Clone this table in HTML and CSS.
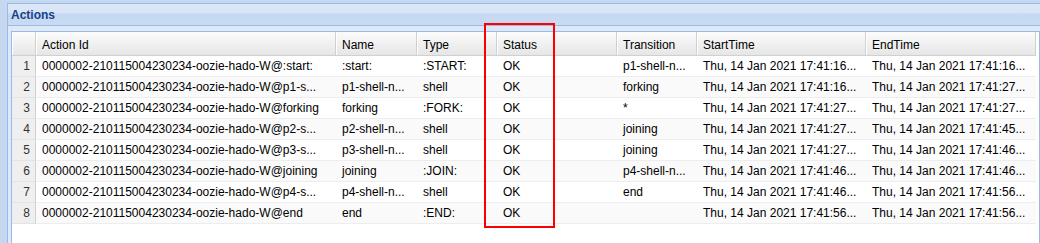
FILE: index.html
```html
<!DOCTYPE html>
<html>
<head>
  <meta charset="utf-8">
  <title>Workflow Actions</title>
  <link rel="stylesheet" href="styles.css">
</head>
<body>
  <div class="viewport">
    <div class="panel">
      <div class="panel-header"><span class="panel-title">Actions</span></div>
      <div class="panel-body">
        <div class="grid">
          <table class="grid-table">
            <colgroup>
              <col class="c-rn"><col class="c-id"><col class="c-name"><col class="c-type">
              <col class="c-status"><col class="c-trans"><col class="c-start"><col class="c-end">
            </colgroup>
            <thead>
              <tr>
                <th class="rn"></th>
                <th>Action Id</th>
                <th>Name</th>
                <th>Type</th>
                <th>Status</th>
                <th>Transition</th>
                <th>StartTime</th>
                <th>EndTime</th>
              </tr>
            </thead>
            <tbody>
              <tr>
                <td class="rn">1</td>
                <td>0000002-210115004230234-oozie-hado-W@:start:</td>
                <td>:start:</td>
                <td>:START:</td>
                <td>OK</td>
                <td>p1-shell-n...</td>
                <td>Thu, 14 Jan 2021 17:41:16...</td>
                <td>Thu, 14 Jan 2021 17:41:16...</td>
              </tr>
              <tr>
                <td class="rn">2</td>
                <td>0000002-210115004230234-oozie-hado-W@p1-s...</td>
                <td>p1-shell-n...</td>
                <td>shell</td>
                <td>OK</td>
                <td>forking</td>
                <td>Thu, 14 Jan 2021 17:41:16...</td>
                <td>Thu, 14 Jan 2021 17:41:27...</td>
              </tr>
              <tr>
                <td class="rn">3</td>
                <td>0000002-210115004230234-oozie-hado-W@forking</td>
                <td>forking</td>
                <td>:FORK:</td>
                <td>OK</td>
                <td>*</td>
                <td>Thu, 14 Jan 2021 17:41:27...</td>
                <td>Thu, 14 Jan 2021 17:41:27...</td>
              </tr>
              <tr>
                <td class="rn">4</td>
                <td>0000002-210115004230234-oozie-hado-W@p2-s...</td>
                <td>p2-shell-n...</td>
                <td>shell</td>
                <td>OK</td>
                <td>joining</td>
                <td>Thu, 14 Jan 2021 17:41:27...</td>
                <td>Thu, 14 Jan 2021 17:41:45...</td>
              </tr>
              <tr>
                <td class="rn">5</td>
                <td>0000002-210115004230234-oozie-hado-W@p3-s...</td>
                <td>p3-shell-n...</td>
                <td>shell</td>
                <td>OK</td>
                <td>joining</td>
                <td>Thu, 14 Jan 2021 17:41:27...</td>
                <td>Thu, 14 Jan 2021 17:41:46...</td>
              </tr>
              <tr>
                <td class="rn">6</td>
                <td>0000002-210115004230234-oozie-hado-W@joining</td>
                <td>joining</td>
                <td>:JOIN:</td>
                <td>OK</td>
                <td>p4-shell-n...</td>
                <td>Thu, 14 Jan 2021 17:41:46...</td>
                <td>Thu, 14 Jan 2021 17:41:46...</td>
              </tr>
              <tr>
                <td class="rn">7</td>
                <td>0000002-210115004230234-oozie-hado-W@p4-s...</td>
                <td>p4-shell-n...</td>
                <td>shell</td>
                <td>OK</td>
                <td>end</td>
                <td>Thu, 14 Jan 2021 17:41:46...</td>
                <td>Thu, 14 Jan 2021 17:41:56...</td>
              </tr>
              <tr>
                <td class="rn">8</td>
                <td>0000002-210115004230234-oozie-hado-W@end</td>
                <td>end</td>
                <td>:END:</td>
                <td>OK</td>
                <td></td>
                <td>Thu, 14 Jan 2021 17:41:56...</td>
                <td>Thu, 14 Jan 2021 17:41:56...</td>
              </tr>
            </tbody>
          </table>
        </div>
      </div>
    </div>
    <div class="highlight"></div>
  </div>
</body>
</html>
```
FILE: styles.css
```css
html, body {
  margin: 0;
  height: 100%;
  overflow: hidden;
}
body {
  background: #c6d8f0;
  font-family: 'Liberation Sans', Arial, sans-serif;
  font-size: 12px;
  color: #000;
}
.viewport {
  position: relative;
  height: 100%;
  box-sizing: border-box;
  padding: 3px 0 0 7px;
  display: flex;
  flex-direction: column;
}
.panel {
  flex: 1;
  display: flex;
  flex-direction: column;
  border-top: 1px solid #99bbe8;
  border-left: 1px solid #99bbe8;
}
.panel-header {
  height: 21px;
  padding-left: 3px;
  border-bottom: 1px solid #99bbe8;
  background: linear-gradient(#dce8f7 0, #d6e4f5 9px, #c6d9f1 10px, #c9dbf2 21px);
}
.panel-title {
  display: block;
  padding-top: 4px;
  line-height: 14px;
  font-weight: bold;
  font-size: 12px;
  color: #15428b;
}
.panel-body {
  flex: 1;
  display: flex;
  padding: 5px 0 0 3px;
  background: #dfe8f6;
}
.grid {
  flex: 1;
  border: 1px solid #99bbe8;
  border-bottom: 0;
  background: #fff;
}
.grid-table {
  table-layout: fixed;
  border-collapse: separate;
  border-spacing: 0;
  width: 1024px;
}
.c-rn { width: 24px; }
.c-id { width: 300px; }
.c-name { width: 81px; }
.c-type { width: 80px; }
.c-status { width: 120px; }
.c-trans { width: 80px; }
.c-start { width: 169px; }
.c-end { width: 170px; }
.grid-table th,
.grid-table td {
  padding: 0 2px 0 6px;
  white-space: nowrap;
  overflow: hidden;
  text-overflow: ellipsis;
  text-align: left;
}
.grid-table th {
  height: 24px;
  padding-top: 2px;
  box-sizing: border-box;
  font-weight: normal;
  color: #000;
  background: linear-gradient(#fbfbfb, #f3f3f3 40%, #e6e6e6);
  border-right: 1px solid #d0d0d0;
  border-bottom: 1px solid #d0d0d0;
  box-shadow: inset 1px 0 #fff;
}
.grid-table td {
  height: 20px;
  border-bottom: 1px solid #ededed;
}
.grid-table tbody tr:nth-child(even) td {
  background: #fafafa;
}
.grid-table td.rn,
.grid-table tbody tr:nth-child(even) td.rn {
  text-align: right;
  padding: 0 5px 0 0;
  color: #333;
  background: #efefef;
  border-right: 1px solid #d0d0d0;
  border-bottom-color: #e4e4e4;
}
.highlight {
  position: absolute;
  left: 484px;
  top: 23px;
  width: 71px;
  height: 205px;
  box-sizing: border-box;
  border: 2px solid #f00;
}
```
